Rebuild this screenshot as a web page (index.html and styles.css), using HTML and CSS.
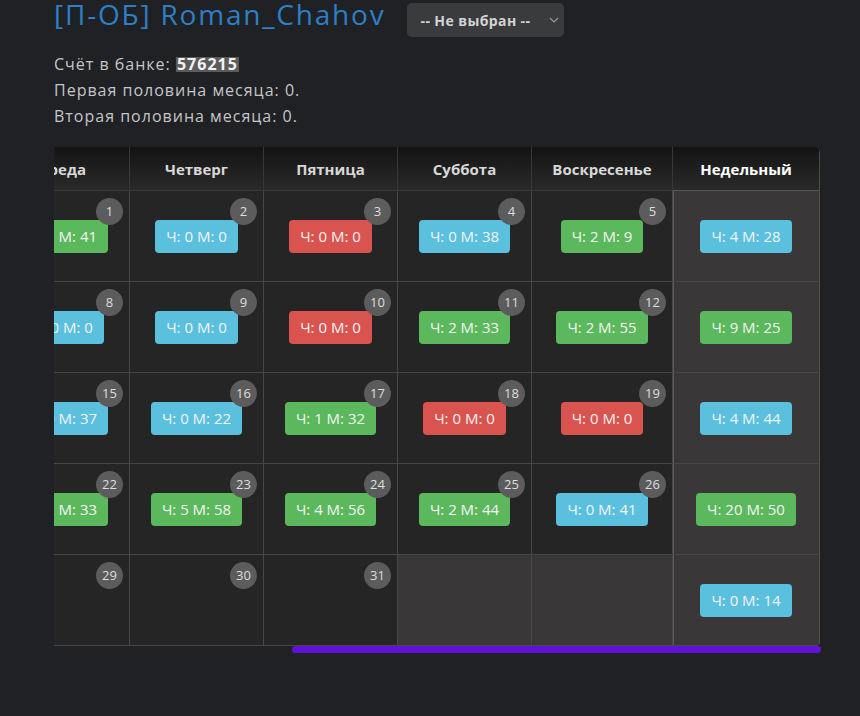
FILE: index.html
```html
<!DOCTYPE html>
<html lang="ru">
<head>
<meta charset="utf-8">
<title>Roman_Chahov</title>
<link rel="stylesheet" href="styles.css">
</head>
<body>
<div class="page">
  <div class="top">
    <h1 class="title">[П-ОБ] Roman_Chahov</h1>
    <div class="select">
      <span>-- Не выбран --</span>
      <svg class="chev" width="10" height="6" viewBox="0 0 10 6"><path d="M1 1l4 4 4-4" fill="none" stroke="#9a9a9a" stroke-width="1.2"/></svg>
    </div>
  </div>
  <div class="info">
    <div>Счёт в банке: <span class="hl">576215</span></div>
    <div>Первая половина месяца: 0.</div>
    <div>Вторая половина месяца: 0.</div>
  </div>
  <div class="scroller" id="scroller">
    <div class="cal">
      <div class="hd">Понедельник</div>
      <div class="hd">Вторник</div>
      <div class="hd">Среда</div>
      <div class="hd">Четверг</div>
      <div class="hd">Пятница</div>
      <div class="hd">Суббота</div>
      <div class="hd">Воскресенье</div>
      <div class="hd wk">Недельный</div>

      <div class="cell off"></div>
      <div class="cell off"></div>
      <div class="cell"><span class="lbl g">Ч: 1 М: 41</span><span class="num">1</span></div>
      <div class="cell"><span class="lbl b">Ч: 0 М: 0</span><span class="num">2</span></div>
      <div class="cell"><span class="lbl r">Ч: 0 М: 0</span><span class="num">3</span></div>
      <div class="cell"><span class="lbl b">Ч: 0 М: 38</span><span class="num">4</span></div>
      <div class="cell"><span class="lbl g">Ч: 2 М: 9</span><span class="num">5</span></div>
      <div class="cell wk"><span class="lbl b">Ч: 4 М: 28</span></div>

      <div class="cell"><span class="lbl g">Ч: 2 М: 0</span><span class="num">6</span></div>
      <div class="cell"><span class="lbl g">Ч: 1 М: 57</span><span class="num">7</span></div>
      <div class="cell"><span class="lbl b">Ч: 0 М: 0</span><span class="num">8</span></div>
      <div class="cell"><span class="lbl b">Ч: 0 М: 0</span><span class="num">9</span></div>
      <div class="cell"><span class="lbl r">Ч: 0 М: 0</span><span class="num">10</span></div>
      <div class="cell"><span class="lbl g">Ч: 2 М: 33</span><span class="num">11</span></div>
      <div class="cell"><span class="lbl g">Ч: 2 М: 55</span><span class="num">12</span></div>
      <div class="cell wk"><span class="lbl g">Ч: 9 М: 25</span></div>

      <div class="cell"><span class="lbl g">Ч: 1 М: 13</span><span class="num">13</span></div>
      <div class="cell"><span class="lbl g">Ч: 1 М: 0</span><span class="num">14</span></div>
      <div class="cell"><span class="lbl b">Ч: 0 М: 37</span><span class="num">15</span></div>
      <div class="cell"><span class="lbl b">Ч: 0 М: 22</span><span class="num">16</span></div>
      <div class="cell"><span class="lbl g">Ч: 1 М: 32</span><span class="num">17</span></div>
      <div class="cell"><span class="lbl r">Ч: 0 М: 0</span><span class="num">18</span></div>
      <div class="cell"><span class="lbl r">Ч: 0 М: 0</span><span class="num">19</span></div>
      <div class="cell wk"><span class="lbl b">Ч: 4 М: 44</span></div>

      <div class="cell"><span class="lbl g">Ч: 2 М: 10</span><span class="num">20</span></div>
      <div class="cell"><span class="lbl g">Ч: 1 М: 48</span><span class="num">21</span></div>
      <div class="cell"><span class="lbl g">Ч: 2 М: 33</span><span class="num">22</span></div>
      <div class="cell"><span class="lbl g">Ч: 5 М: 58</span><span class="num">23</span></div>
      <div class="cell"><span class="lbl g">Ч: 4 М: 56</span><span class="num">24</span></div>
      <div class="cell"><span class="lbl g">Ч: 2 М: 44</span><span class="num">25</span></div>
      <div class="cell"><span class="lbl b">Ч: 0 М: 41</span><span class="num">26</span></div>
      <div class="cell wk"><span class="lbl g">Ч: 20 М: 50</span></div>

      <div class="cell"><span class="lbl b">Ч: 0 М: 14</span><span class="num">27</span></div>
      <div class="cell"><span class="lbl b">Ч: 0 М: 0</span><span class="num">28</span></div>
      <div class="cell"><span class="num">29</span></div>
      <div class="cell"><span class="num">30</span></div>
      <div class="cell"><span class="num">31</span></div>
      <div class="cell off"></div>
      <div class="cell off"></div>
      <div class="cell wk"><span class="lbl b">Ч: 0 М: 14</span></div>
    </div>
  </div>
  <div class="scrollbar"><div class="thumb"></div></div>
</div>
<script src="script.js"></script>
</body>
</html>
```

FILE: styles.css
```css
body {
  margin: 0;
  background: #1f2125;
  font-family: "Open Sans", "Noto Sans", sans-serif;
}

.page {
  padding-left: 54px;
}

.top {
  display: flex;
  align-items: flex-start;
  gap: 21px;
}

.title {
  margin: 0;
  font-size: 28px;
  line-height: 28px;
  font-weight: 400;
  letter-spacing: 1.8px;
  color: #2e7fc6;
  white-space: nowrap;
}

.select {
  margin-top: 3px;
  width: 157px;
  height: 34px;
  box-sizing: border-box;
  background: #3a3b3d;
  border-radius: 5px;
  display: flex;
  align-items: center;
  justify-content: space-between;
  padding: 0 5px 0 14px;
  color: #d4d4d4;
  font-size: 14px;
  font-weight: 700;
  letter-spacing: 0.4px;
  white-space: nowrap;
}

.chev {
  display: block;
}

.info {
  margin-top: 14px;
  font-size: 16px;
  line-height: 26px;
  letter-spacing: 1px;
  color: #c6c6c6;
}

.hl {
  display: inline-block;
  height: 15px;
  line-height: 15px;
  padding: 0 1px;
  background: #5b5b5b;
  color: #f2f2f2;
  font-weight: 700;
}

.scroller {
  margin-top: 18px;
  width: 766px;
  overflow-x: auto;
  overflow-y: hidden;
  scrollbar-width: none;
}

.scroller::-webkit-scrollbar {
  display: none;
}

.scrollbar {
  width: 767px;
  height: 7px;
}

.thumb {
  margin-left: 238px;
  width: 529px;
  height: 7px;
  background: #6211d6;
  border-radius: 4px;
}

.cal {
  display: grid;
  grid-template-columns: repeat(6, 134px) 141px 147px;
  grid-template-rows: 44px repeat(5, 91px);
  width: 1092px;
  border-radius: 0 6px 4px 0;
  overflow: hidden;
}

.hd {
  display: flex;
  align-items: center;
  justify-content: center;
  box-sizing: border-box;
  background: linear-gradient(#141414, #2a2a2a);
  border-right: 1px solid #383838;
  border-bottom: 1px solid #3a3a3a;
  color: #d8d8d8;
  font-size: 15px;
  font-weight: 700;
}

.hd.wk {
  color: #ffffff;
  border-right: 1px solid #4a4a4a;
  border-bottom: 1px solid #555555;
}

.cell {
  position: relative;
  display: flex;
  align-items: center;
  justify-content: center;
  box-sizing: border-box;
  background: #252525;
  border-right: 1px solid #474747;
  border-bottom: 1px solid #474747;
}

.cell.off {
  background: #393737;
}

.cell.wk {
  background: #393737;
  border-right: 1px solid #505050;
  box-shadow: inset 1px 0 0 #5c5c5c;
}

.lbl {
  height: 33px;
  line-height: 33px;
  padding: 0 11px;
  border-radius: 4px;
  font-size: 15px;
  color: #f4f4f4;
  white-space: nowrap;
}

.lbl.g { background: #5cb85c; }
.lbl.b { background: #5bc0de; }
.lbl.r { background: #d9534f; }

.num {
  position: absolute;
  top: 7px;
  right: 6px;
  width: 27px;
  height: 27px;
  border-radius: 50%;
  background: #5c5c5c;
  color: #dedede;
  font-size: 13px;
  line-height: 27px;
  text-align: center;
}
```

FILE: script.js
```js
var s = document.getElementById('scroller');
s.scrollLeft = s.scrollWidth;
```
